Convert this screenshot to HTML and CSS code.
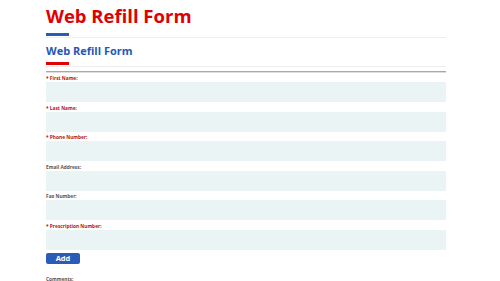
FILE: index.html
```html
<!DOCTYPE html>
<html lang="en">
<head>
    <meta charset="UTF-8">
    <meta name="viewport" content="width=device-width, initial-scale=1.0">
    <title>Web Refill Form</title>
    <link rel="stylesheet" href="styles.css">
</head>
<body>
    <div class="page">
        <h1 class="page-title">Web Refill Form</h1>
        <div class="title-rule"><span class="accent accent-blue"></span></div>

        <h2 class="form-title">Web Refill Form</h2>
        <div class="title-rule"><span class="accent accent-red"></span></div>
        <div class="form-rule"></div>

        <form class="refill-form">
            <div class="field">
                <label class="required">* First Name:</label>
                <input type="text">
            </div>
            <div class="field">
                <label class="required">* Last Name:</label>
                <input type="text">
            </div>
            <div class="field">
                <label class="required">* Phone Number:</label>
                <input type="text">
            </div>
            <div class="field">
                <label>Email Address:</label>
                <input type="text">
            </div>
            <div class="field">
                <label>Fax Number:</label>
                <input type="text">
            </div>
            <div class="field">
                <label class="required">* Prescription Number:</label>
                <input type="text">
            </div>
            <button type="button" class="add-btn">Add</button>
            <div class="field">
                <label>Comments:</label>
                <textarea></textarea>
            </div>
        </form>
    </div>
</body>
</html>
```

FILE: styles.css
```css
html {
    overflow: hidden;
}

body {
    margin: 0;
    font-family: 'Open Sans', Arial, sans-serif;
    background: #fff;
}

.page {
    width: 400px;
    margin-left: 46px;
    padding-top: 3px;
}

.page-title {
    margin: 0;
    font-size: 18.5px;
    line-height: 26px;
    font-weight: 700;
    color: #e00000;
}

.title-rule {
    border-bottom: 1px solid #eeeeee;
    height: 4px;
    margin-top: 4px;
}

.accent {
    display: block;
    width: 23px;
    height: 3px;
}

.accent-blue {
    background: #2b5bb8;
}

.accent-red {
    background: #e00000;
}

.form-title {
    margin: 6px 0 0;
    font-size: 11px;
    line-height: 14px;
    font-weight: 700;
    color: #2457b5;
}

.form-rule {
    margin-top: 4px;
    height: 1px;
    background: #a8a8a8;
    border-bottom: 1px solid #dddddd;
}

.refill-form {
    padding-top: 2px;
}

.field label {
    display: block;
    font-size: 4.8px;
    line-height: 6px;
    font-weight: 700;
    color: #555;
    margin-bottom: 1px;
}

.field label.required {
    color: #b01515;
}

.field input,
.field textarea {
    display: block;
    box-sizing: border-box;
    width: 100%;
    height: 20px;
    border: none;
    background: #eaf4f5;
    margin: 0 0 2.6px;
}

.field textarea {
    height: 60px;
    margin-top: 3px;
    resize: none;
}

.add-btn {
    display: block;
    width: 34px;
    height: 11px;
    padding: 0;
    margin: 1.4px 0 12px;
    border: none;
    border-radius: 2px;
    background: #2b5bb8;
    color: #fff;
    font-family: 'Open Sans', Arial, sans-serif;
    font-size: 7.5px;
    line-height: 11px;
    font-weight: 700;
}
```
